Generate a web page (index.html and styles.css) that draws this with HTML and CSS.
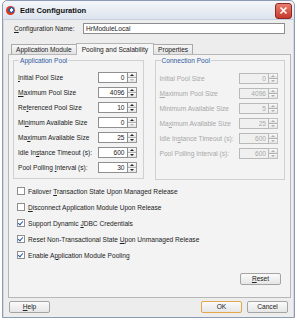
FILE: index.html
```html
<!DOCTYPE html>
<html lang="en">
<head>
    <meta charset="UTF-8">
    <title>Edit Configuration</title>
    <link rel="stylesheet" href="styles.css">
</head>
<body>
    <div class="window">
        <div class="titlebar">
            <span class="app-icon"></span>
            <span class="title">Edit Configuration</span>
            <span class="close">
                <svg width="9" height="9" viewBox="0 0 9 9"><path d="M1.5 1.5 L7.5 7.5 M7.5 1.5 L1.5 7.5" stroke="#fff" stroke-width="1.6"/></svg>
            </span>
        </div>

        <div class="body">
            <div class="name-row">
                <span class="label"><u>C</u>onfiguration Name:</span>
                <span class="textbox">HrModuleLocal</span>
            </div>

            <div class="tabs">
                <span class="tab">Application Module</span>
                <span class="tab active">Pooling and Scalability</span>
                <span class="tab">Properties</span>
            </div>

            <div class="panel">
                <div class="groups">
                    <fieldset class="group app">
                        <legend>Application Pool</legend>
                        <div class="row"><span><u>I</u>nitial Pool Size</span><span class="spin"><span class="val">0</span><span class="btns"><i class="up"></i><i class="dn off"></i></span></span></div>
                        <div class="row"><span><u>M</u>aximum Pool Size</span><span class="spin"><span class="val">4096</span><span class="btns"><i class="up"></i><i class="dn"></i></span></span></div>
                        <div class="row"><span>Re<u>f</u>erenced Pool Size</span><span class="spin"><span class="val">10</span><span class="btns"><i class="up"></i><i class="dn"></i></span></span></div>
                        <div class="row"><span>Mi<u>n</u>imum Available Size</span><span class="spin"><span class="val">0</span><span class="btns"><i class="up"></i><i class="dn off"></i></span></span></div>
                        <div class="row"><span>Ma<u>x</u>imum Available Size</span><span class="spin"><span class="val">25</span><span class="btns"><i class="up"></i><i class="dn"></i></span></span></div>
                        <div class="row"><span>Idle In<u>s</u>tance Timeout (s):</span><span class="spin"><span class="val">600</span><span class="btns"><i class="up"></i><i class="dn"></i></span></span></div>
                        <div class="row"><span>Pool Polling <u>I</u>nterval (s):</span><span class="spin"><span class="val">30</span><span class="btns"><i class="up"></i><i class="dn"></i></span></span></div>
                    </fieldset>

                    <fieldset class="group conn">
                        <legend>Connection Pool</legend>
                        <div class="row"><span>Initial Pool Size</span><span class="spin"><span class="val">0</span><span class="btns"><i class="up"></i><i class="dn"></i></span></span></div>
                        <div class="row"><span><u>M</u>aximum Pool Size</span><span class="spin"><span class="val">4096</span><span class="btns"><i class="up"></i><i class="dn"></i></span></span></div>
                        <div class="row"><span>Minimum Available Size</span><span class="spin"><span class="val">5</span><span class="btns"><i class="up"></i><i class="dn"></i></span></span></div>
                        <div class="row"><span>Ma<u>x</u>imum Available Size</span><span class="spin"><span class="val">25</span><span class="btns"><i class="up"></i><i class="dn"></i></span></span></div>
                        <div class="row"><span>Idle In<u>s</u>tance Timeout (s):</span><span class="spin"><span class="val">600</span><span class="btns"><i class="up"></i><i class="dn"></i></span></span></div>
                        <div class="row"><span>Pool Polling Interval (s):</span><span class="spin"><span class="val">600</span><span class="btns"><i class="up"></i><i class="dn"></i></span></span></div>
                    </fieldset>
                </div>

                <div class="checks">
                    <label class="check"><span class="box"></span><span>Failover <u>T</u>ransaction State Upon Managed Release</span></label>
                    <label class="check"><span class="box"></span><span><u>D</u>isconnect Application Module Upon Release</span></label>
                    <label class="check"><span class="box on"></span><span>Support Dynamic <u>J</u>DBC Credentials</span></label>
                    <label class="check"><span class="box on"></span><span>Reset Non-Transactional State <u>U</u>pon Unmanaged Release</span></label>
                    <label class="check"><span class="box on"></span><span>Enable A<u>p</u>plication Module Pooling</span></label>
                </div>

                <div class="reset-row">
                    <span class="button"><u>R</u>eset</span>
                </div>
            </div>

            <div class="footer">
                <span class="button"><u>H</u>elp</span>
                <span class="spacer"></span>
                <span class="button default">OK</span>
                <span class="button">Cancel</span>
            </div>
        </div>
    </div>
</body>
</html>
```

FILE: styles.css
```css
body {
    margin: 0;
    background-color: #ffffff;
    font-family: "Liberation Sans", Arial, sans-serif;
    font-size: 6.6px;
    color: #222;
}

u {
    text-decoration-thickness: 0.5px;
    text-underline-offset: 1px;
}

.window {
    margin-left: 2px;
    width: 291px;
    height: 316px;
    border: 1px solid #8c9bb2;
    border-radius: 5px 5px 0 0;
    background-color: #ededed;
    display: flex;
    flex-direction: column;
}

.titlebar {
    height: 18px;
    display: flex;
    align-items: center;
    padding: 0 2px 0 3px;
    background: linear-gradient(#f4f6fa, #dde4ee);
    border-radius: 5px 5px 0 0;
    border-bottom: 1px solid #c4cedc;
}

.app-icon {
    width: 9px;
    height: 9px;
    border-radius: 50%;
    background: radial-gradient(circle at 60% 45%, #ffffff 0 22%, #2a5db0 24% 40%, #d9391e 42%);
    margin-right: 5px;
}

.title {
    font-weight: bold;
    font-size: 7.6px;
    color: #111;
    flex: 1;
}

.close {
    width: 15px;
    height: 14px;
    border-radius: 3px;
    border: 1px solid #8a2a22;
    background: linear-gradient(#e77f70, #c7392b);
    display: flex;
    align-items: center;
    justify-content: center;
    margin-top: 1px;
}

.body {
    flex: 1;
    display: flex;
    flex-direction: column;
    padding: 0 2px 0 4px;
    border-left: 1px solid #d3d9e2;
    border-right: 1px solid #d3d9e2;
}

.name-row {
    display: flex;
    align-items: center;
    margin-top: 3px;
    height: 11px;
}

.name-row .label {
    margin-left: 6px;
    width: 69px;
}

.textbox {
    width: 198px;
    height: 9px;
    border: 1px solid #8d8d8d;
    background: #fff;
    padding-left: 2px;
    line-height: 9px;
}

.tabs {
    display: flex;
    margin-top: 9px;
    margin-left: 3px;
    height: 11px;
    align-items: flex-end;
}

.tab {
    height: 9px;
    line-height: 9px;
    padding: 0 4px;
    border: 1px solid #a9a9a9;
    border-bottom: none;
    background: linear-gradient(#f7f7f7, #e2e2e2);
    margin-right: -1px;
}

.tab.active {
    height: 11px;
    line-height: 11px;
    background: #f5f5f5;
    border-color: #b5b5b5;
    position: relative;
    top: 1px;
    padding: 0 5px;
}

.panel {
    height: 240px;
    border: 1px solid #b7b7b7;
    background: #f3f3f3;
    display: flex;
    flex-direction: column;
    padding: 2px 5px 0 4px;
}

.groups {
    display: flex;
    gap: 11px;
}

.group {
    margin: 0;
    border: 1px solid #d0d0d0;
    padding: 8px 4px 4px 4px;
    height: 108px;
    display: flex;
    flex-direction: column;
    gap: 4px;
}

.group legend {
    color: #2f5a9e;
    padding: 0 1px;
    margin-left: 1px;
}

.group.app {
    width: 122px;
}

.group.conn {
    width: 122px;
    color: #a8a8a8;
    padding-top: 9px;
    gap: 4px;
}

.row {
    display: flex;
    align-items: center;
    justify-content: space-between;
    height: 11px;
}

.spin {
    display: flex;
    height: 11px;
    margin-right: 2px;
}

.val {
    width: 26px;
    height: 9px;
    border: 1px solid #8f8f8f;
    background: #fff;
    text-align: right;
    padding-right: 2px;
    line-height: 9px;
    color: #222;
}

.btns {
    width: 8px;
    display: flex;
    flex-direction: column;
    border: 1px solid #9a9a9a;
    border-left: none;
    background: #f0f0f0;
}

.btns i {
    flex: 1;
    position: relative;
    background: linear-gradient(#fbfbfb, #e3e3e3);
}

.btns i.up {
    border-bottom: 1px solid #b0b0b0;
}

.btns i::after {
    content: "";
    position: absolute;
    left: 2px;
    top: 1px;
    border-left: 2px solid transparent;
    border-right: 2px solid transparent;
}

.btns i.up::after {
    border-bottom: 2px solid #222;
}

.btns i.dn::after {
    border-top: 2px solid #222;
}

.btns i.off::after {
    border-top-color: #b8b8b8;
}

.conn .val {
    background: #f0f0f0;
    border-color: #b9b9b9;
    color: #a8a8a8;
}

.conn .btns {
    border-color: #c0c0c0;
}

.conn .btns i::after {
    border-bottom-color: #b0b0b0;
    border-top-color: #b0b0b0;
}

.checks {
    display: flex;
    flex-direction: column;
    gap: 6px;
    margin-top: 6px;
    padding-left: 4px;
}

.check {
    display: flex;
    align-items: center;
    height: 10px;
}

.box {
    width: 6px;
    height: 6px;
    border: 1px solid #8e8e8e;
    background: #fff;
    margin-right: 3px;
    position: relative;
}

.box.on::after {
    content: "";
    position: absolute;
    left: 1px;
    top: 0;
    width: 2px;
    height: 4px;
    border-right: 1.2px solid #2a5bb5;
    border-bottom: 1.2px solid #2a5bb5;
    transform: rotate(40deg);
}

.reset-row {
    display: flex;
    justify-content: flex-end;
    margin-top: auto;
    margin-bottom: 12px;
    padding-right: 4px;
}

.button {
    width: 39px;
    height: 10px;
    line-height: 10px;
    text-align: center;
    border: 1px solid #a4a4a4;
    border-radius: 2px;
    background: linear-gradient(#fafafa, #e6e6e6);
}

.footer {
    display: flex;
    margin-top: 3px;
    padding-left: 1px;
    gap: 5px;
    padding-right: 3px;
}

.footer .spacer {
    flex: 1;
}

.button.default {
    border-color: #e3a64a;
}
```
